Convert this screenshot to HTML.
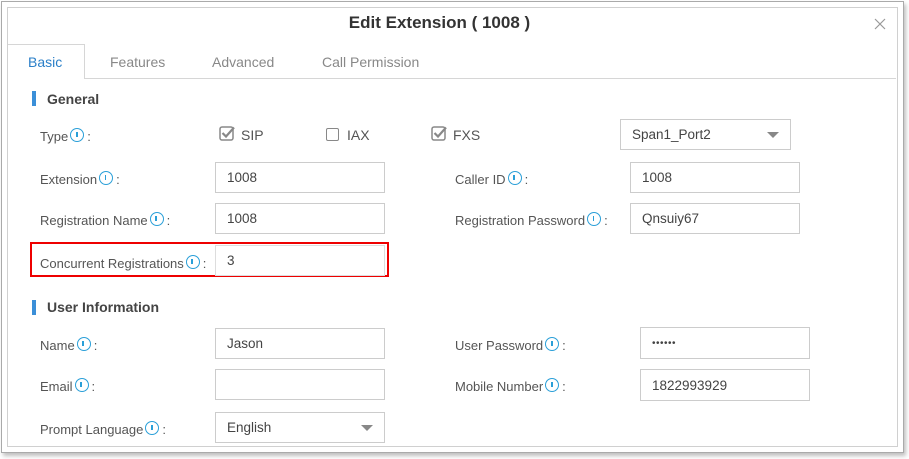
<!DOCTYPE html>
<html><head><style>
body{margin:0;width:909px;height:459px;background:#fff;font-family:"Liberation Sans",sans-serif;position:relative;overflow:hidden;color:#555}
.a{position:absolute}
.outer{left:1px;top:1px;width:901px;height:450px;border:1px solid #aaa;box-shadow:2px 3px 4px rgba(0,0,0,.25);background:#fff}
.inner{left:7px;top:7px;width:889px;height:438px;border:1px solid #d0d0d0;background:#fff}
.lbl{font-size:13px;color:#555;letter-spacing:0px}
.inp{border:1px solid #ccc;background:#fff;font-size:13.5px;color:#444;box-sizing:border-box;padding-left:11px;display:flex;align-items:center}
.i{display:inline-block;width:14px;height:14px;border:1.6px solid #2a9fd8;border-radius:50%;box-sizing:border-box;position:relative;vertical-align:-1px;margin-left:2px;margin-right:3px}
.i:after{content:"";position:absolute;left:4.6px;top:2.5px;width:1.8px;height:5.5px;background:#2a9fd8}
.h{font-size:14px;font-weight:bold;color:#444}
.bar{width:4px;height:15px;background:#3b8fd8}
.tab{font-size:14px;color:#888;top:54px}
.cb{width:13px;height:13px;border:1.5px solid #888;border-radius:2px;box-sizing:border-box}
.arr{width:0;height:0;border-left:6px solid transparent;border-right:6px solid transparent;border-top:6px solid #888;position:absolute}
</style></head><body>
<div class="a outer"></div>
<div class="a inner"></div>
<div class="a" style="left:0;width:909px;top:13px;text-align:center;font-size:17px;font-weight:bold;color:#333;padding-right:30px;box-sizing:border-box">Edit Extension ( 1008 )</div>
<svg class="a" style="left:874px;top:18px" width="12" height="12"><path d="M1 1L11 11M11 1L1 11" stroke="#999" stroke-width="1.2"/></svg>
<div class="a" style="left:8px;top:78px;width:888px;height:1px;background:#d6d6d6"></div>
<div class="a" style="left:8px;top:44px;width:77px;height:35px;border:1px solid #d6d6d6;border-bottom:none;border-left:none;background:#fff;box-sizing:border-box"></div>
<div class="a tab" style="left:28px;color:#2a7fc8">Basic</div>
<div class="a tab" style="left:110px">Features</div>
<div class="a tab" style="left:212px">Advanced</div>
<div class="a tab" style="left:322px">Call Permission</div>

<div class="a bar" style="left:32px;top:91px"></div>
<div class="a h" style="left:47px;top:91px">General</div>

<div class="a lbl" style="left:40px;top:128px">Type<span class="i"></span>:</div>
<svg class="a" style="left:219px;top:125px" width="17" height="16"><rect x="1" y="2" width="13" height="13" rx="2" fill="none" stroke="#888" stroke-width="1.5"/><path d="M3.5 8L7 11.5L15 2.5" fill="none" stroke="#888" stroke-width="2.2"/></svg>
<div class="a lbl" style="left:241px;top:127px;font-size:14px">SIP</div>
<div class="a cb" style="left:326px;top:128px"></div>
<div class="a lbl" style="left:347px;top:127px;font-size:14px">IAX</div>
<svg class="a" style="left:431px;top:125px" width="17" height="16"><rect x="1" y="2" width="13" height="13" rx="2" fill="none" stroke="#888" stroke-width="1.5"/><path d="M3.5 8L7 11.5L15 2.5" fill="none" stroke="#888" stroke-width="2.2"/></svg>
<div class="a lbl" style="left:453px;top:127px;font-size:14px">FXS</div>
<div class="a inp" style="left:620px;top:119px;width:171px;height:31px">Span1_Port2</div>
<div class="arr" style="left:767px;top:132px"></div>

<div class="a lbl" style="left:40px;top:171px">Extension<span class="i"></span>:</div>
<div class="a inp" style="left:215px;top:162px;width:170px;height:31px">1008</div>
<div class="a lbl" style="left:455px;top:171px">Caller ID<span class="i"></span>:</div>
<div class="a inp" style="left:630px;top:162px;width:170px;height:31px">1008</div>

<div class="a lbl" style="left:40px;top:212px">Registration Name<span class="i"></span>:</div>
<div class="a inp" style="left:215px;top:203px;width:170px;height:31px">1008</div>
<div class="a lbl" style="left:455px;top:212px">Registration Password<span class="i"></span>:</div>
<div class="a inp" style="left:630px;top:203px;width:170px;height:31px">Qnsuiy67</div>

<div class="a" style="left:30px;top:242px;width:359px;height:35px;border:2px solid #e00;box-sizing:border-box"></div>
<div class="a lbl" style="left:40px;top:255px">Concurrent Registrations<span class="i"></span>:</div>
<div class="a inp" style="left:215px;top:245px;width:170px;height:31px;border-color:#ddd">3</div>

<div class="a bar" style="left:32px;top:300px"></div>
<div class="a h" style="left:47px;top:299px">User Information</div>

<div class="a lbl" style="left:40px;top:337px">Name<span class="i"></span>:</div>
<div class="a inp" style="left:215px;top:328px;width:170px;height:31px">Jason</div>
<div class="a lbl" style="left:455px;top:337px">User Password<span class="i"></span>:</div>
<div class="a inp" style="left:640px;top:327px;width:170px;height:32px;font-size:10px;letter-spacing:0.5px">••••••</div>

<div class="a lbl" style="left:40px;top:378px">Email<span class="i"></span>:</div>
<div class="a inp" style="left:215px;top:369px;width:170px;height:31px"></div>
<div class="a lbl" style="left:455px;top:378px">Mobile Number<span class="i"></span>:</div>
<div class="a inp" style="left:640px;top:369px;width:170px;height:32px">1822993929</div>

<div class="a lbl" style="left:40px;top:421px">Prompt Language<span class="i"></span>:</div>
<div class="a inp" style="left:215px;top:412px;width:170px;height:31px">English</div>
<div class="arr" style="left:361px;top:425px"></div>
</body></html>
